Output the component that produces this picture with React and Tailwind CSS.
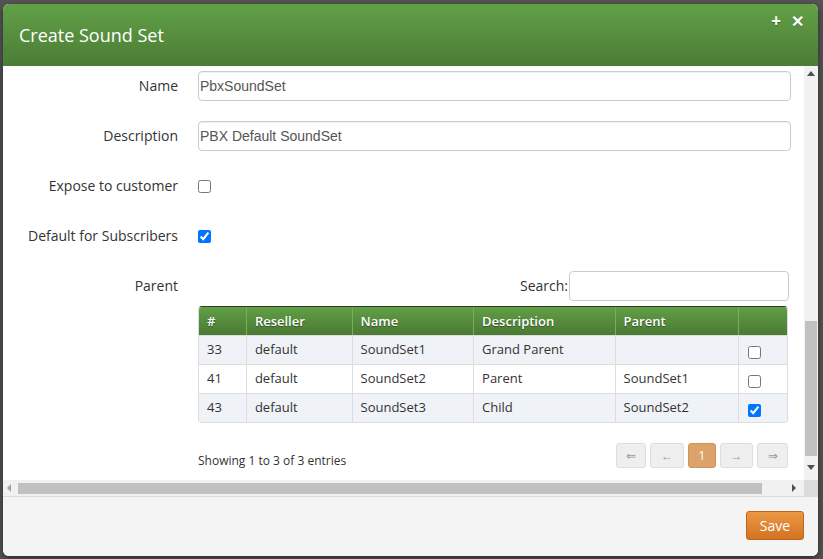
import React from 'react';

const rows = [
  { id: 33, reseller: 'default', name: 'SoundSet1', description: 'Grand Parent', parent: '', checked: false },
  { id: 41, reseller: 'default', name: 'SoundSet2', description: 'Parent', parent: 'SoundSet1', checked: false },
  { id: 43, reseller: 'default', name: 'SoundSet3', description: 'Child', parent: 'SoundSet2', checked: true },
];

const cols = [
  { label: '#', w: 'w-[48px]' },
  { label: 'Reseller', w: 'w-[106px]' },
  { label: 'Name', w: 'w-[122px]' },
  { label: 'Description', w: 'w-[142px]' },
  { label: 'Parent', w: 'w-[124px]' },
  { label: '', w: 'w-[48px]' },
];

function FormRow({ label, children }) {
  return (
    <div className="mb-[20px] flex h-[30px] items-center">
      <label className="w-[175px] pb-[1px] text-right text-[14px] text-[#333]">{label}</label>
      <div className="ml-[20px] flex flex-1 items-center">{children}</div>
    </div>
  );
}

function TextInput({ value }) {
  return (
    <div className="flex h-[30px] w-full items-center rounded-[4px] border border-[#ccc] bg-white px-[1px] text-[14px] text-[#555] shadow-[inset_0_1px_1px_rgba(0,0,0,0.06)] [font-family:'Liberation_Sans',Arial,sans-serif]">
      {value}
    </div>
  );
}

function PageBtn({ children, active, w }) {
  return (
    <div
      className={
        'flex h-[25px] items-center justify-center rounded-[3px] border text-[12px] ' +
        w +
        (active
          ? ' border-[#d09458] bg-[#dba26a] text-white'
          : ' border-[#ddd] bg-[#efefef] text-[#999]')
      }
    >
      {children}
    </div>
  );
}

export default function App() {
  return (
    <div className="h-[559px] w-[823px] overflow-hidden bg-[#555] pb-[3px] pl-[3px] pr-[5px] pt-[4px] [font-family:'Open_Sans',sans-serif]">
      <div className="flex h-[552px] flex-col overflow-hidden rounded-[6px] bg-white shadow-[0_3px_8px_rgba(0,0,0,0.5)]">
        {/* header */}
        <div className="relative flex h-[62px] shrink-0 items-center bg-gradient-to-b from-[#62a047] to-[#4b7d35] pl-[16px]">
          <h3 className="text-[18px] text-white">Create Sound Set</h3>
          <div className="absolute right-[14px] top-[4px] flex items-center gap-[10px] text-[17px] font-bold text-white [text-shadow:0_1px_0_rgba(0,0,0,0.3)]">
            <span>+</span>
            <span className="text-[16px]">✕</span>
          </div>
        </div>

        {/* body */}
        <div className="flex h-[414px] shrink-0">
          <div className="flex-1 pr-[13px] pt-[5px]">
            <FormRow label="Name">
              <TextInput value="PbxSoundSet" />
            </FormRow>
            <FormRow label="Description">
              <TextInput value="PBX Default SoundSet" />
            </FormRow>
            <FormRow label="Expose to customer">
              <input type="checkbox" readOnly className="m-0 h-[13px] w-[13px]" />
            </FormRow>
            <FormRow label="Default for Subscribers">
              <input type="checkbox" defaultChecked className="m-0 h-[13px] w-[13px]" />
            </FormRow>
            <div className="flex">
              <div className="flex h-[30px] w-[175px] items-center justify-end pb-[2px] text-[14px] text-[#333]">Parent</div>
              <div className="ml-[20px] w-[591px]">
                <div className="flex h-[30px] items-center justify-end text-[14px] text-[#333]">
                  <span className="pb-[2px]">Search:</span>
                  <div className="ml-[1px] h-[30px] w-[220px] rounded-[4px] border border-[#ccc] bg-white" />
                </div>
                <div className="mt-[5px] w-[590px] overflow-hidden rounded-[4px] border border-[#ddd] border-t-[#2c3e22]">
                  <div className="flex h-[28px] bg-gradient-to-b from-[#629f46] to-[#4a7a34] text-[13px] font-semibold text-white [text-shadow:0_1px_1px_rgba(0,0,0,0.4)]">
                    {cols.map((c, i) => (
                      <div
                        key={i}
                        className={
                          'flex items-center px-[8px] pt-[1px] ' +
                          c.w +
                          (i < cols.length - 1 ? ' border-r border-[#78b05a]' : '')
                        }
                      >
                        {c.label}
                      </div>
                    ))}
                  </div>
                  {rows.map((r, ri) => (
                    <div
                      key={r.id}
                      className={
                        'flex h-[29px] border-t border-[#ddd] text-[13px] text-[#333] ' +
                        (ri % 2 === 0 ? 'bg-[#eff2f7]' : 'bg-white')
                      }
                    >
                      {[r.id, r.reseller, r.name, r.description, r.parent].map((v, i) => (
                        <div key={i} className={'flex items-center border-r border-[#ddd] px-[8px] ' + cols[i].w}>
                          {v}
                        </div>
                      ))}
                      <div className="flex w-[48px] items-center px-[9px] pt-[5px]">
                        <input type="checkbox" defaultChecked={r.checked} className="m-0 h-[13px] w-[13px]" />
                      </div>
                    </div>
                  ))}
                </div>
                <div className="mt-[20px] flex w-[590px] items-end justify-between">
                  <span className="mb-[-2px] text-[12px] text-[#333]">Showing 1 to 3 of 3 entries</span>
                  <div className="flex gap-[4px]">
                    <PageBtn w="w-[30px]">⇐</PageBtn>
                    <PageBtn w="w-[34px]">←</PageBtn>
                    <PageBtn w="w-[28px]" active>1</PageBtn>
                    <PageBtn w="w-[33px]">→</PageBtn>
                    <PageBtn w="w-[31px]">⇒</PageBtn>
                  </div>
                </div>
              </div>
            </div>
          </div>
          {/* vertical scrollbar */}
          <div className="flex w-[14px] shrink-0 flex-col items-center bg-[#f1f1f1]">
            <div className="mt-[5px] h-0 w-0 border-x-[4px] border-b-[5px] border-x-transparent border-b-[#505050]" />
            <div className="mt-[245px] h-[135px] w-[12px] bg-[#c1c1c1]" />
            <div className="mt-[9px] h-0 w-0 border-x-[4px] border-t-[5px] border-x-transparent border-t-[#505050]" />
          </div>
        </div>

        {/* horizontal scrollbar */}
        <div className="flex h-[16px] shrink-0 items-center bg-[#f1f1f1]">
          <div className="ml-[4px] h-0 w-0 border-y-[4px] border-r-[4px] border-y-transparent border-r-[#a3a3a3]" />
          <div className="ml-[7px] h-[11px] w-[744px] bg-[#c1c1c1]" />
          <div className="ml-[30px] h-0 w-0 border-y-[4px] border-l-[4px] border-y-transparent border-l-[#505050]" />
          <div className="ml-auto h-full w-[14px] bg-[#dcdcdc]" />
        </div>

        {/* footer */}
        <div className="flex flex-1 items-center justify-end border-t border-[#ddd] bg-[#f4f4f4] pb-[2px] pr-[14px]">
          <button className="h-[29px] w-[58px] rounded-[3px] border border-[#bf6419] bg-gradient-to-b from-[#ec9845] to-[#d2731f] text-[14px] text-white">
            Save
          </button>
        </div>
      </div>
    </div>
  );
}
